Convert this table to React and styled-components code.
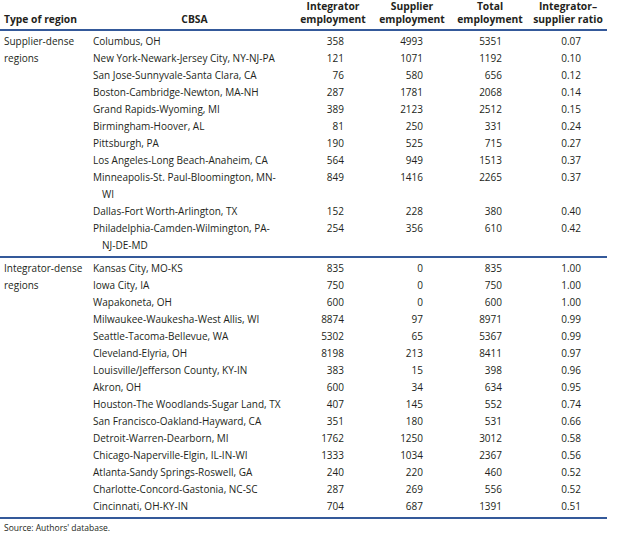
import React from 'react';
import styled, { createGlobalStyle } from 'styled-components';

const GlobalStyle = createGlobalStyle`
  html, body {
    margin: 0;
    padding: 0;
    background: #ffffff;
  }
  body {
    font-family: "Open Sans", "Noto Sans", "Liberation Sans", sans-serif;
    color: #231f20;
  }
`;

const RULE = '#34599a';

// column geometry: width, right padding for numbers, header shift
const COLS = [
  { w: 93 },
  { w: 203 },
  { w: 74, pr: 26 },
  { w: 84, pr: 31 },
  { w: 72, pr: 24 },
  { w: 81, pr: 26, hl: 3 },
];

const Wrapper = styled.div`
  width: 607px;
`;

const Table = styled.table`
  width: 607px;
  border-collapse: collapse;
  table-layout: fixed;
  font-size: 10px;
  border-bottom: 2px solid ${RULE};
`;

const HeadCell = styled.th`
  font-weight: 700;
  font-size: 10.3px;
  line-height: 13px;
  padding: 0 0 3px ${p => p.$pl || 0}px;
  text-align: ${p => p.$align || 'center'};
  vertical-align: bottom;
  white-space: nowrap;
  border-bottom: 2px solid ${RULE};
`;

const Row = styled.tr`
  border-top: ${p => (p.$rule ? `2px solid ${RULE}` : 'none')};
`;

const Cell = styled.td`
  line-height: 17px;
  vertical-align: top;
  padding: ${p => (p.$first ? 2 : 0)}px ${p => p.$pr || 0}px
    ${p => (p.$last ? 2 : 0)}px ${p => p.$pl || 0}px;
  text-align: ${p => (p.$num ? 'right' : 'left')};
  white-space: nowrap;
`;

const Cont = styled.span`
  display: block;
  padding-left: ${p => (p.$indent ? 9 : 0)}px;
`;

const Source = styled.div`
  font-size: 8.5px;
  line-height: 12px;
  padding: 3px 0 0 4px;
`;

const groups = [
  {
    label: ['Supplier-dense', 'regions'],
    rows: [
      [['Columbus, OH'], 358, 4993, 5351, '0.07'],
      [['New York-Newark-Jersey City, NY-NJ-PA'], 121, 1071, 1192, '0.10'],
      [['San Jose-Sunnyvale-Santa Clara, CA'], 76, 580, 656, '0.12'],
      [['Boston-Cambridge-Newton, MA-NH'], 287, 1781, 2068, '0.14'],
      [['Grand Rapids-Wyoming, MI'], 389, 2123, 2512, '0.15'],
      [['Birmingham-Hoover, AL'], 81, 250, 331, '0.24'],
      [['Pittsburgh, PA'], 190, 525, 715, '0.27'],
      [['Los Angeles-Long Beach-Anaheim, CA'], 564, 949, 1513, '0.37'],
      [['Minneapolis-St. Paul-Bloomington, MN-', 'WI'], 849, 1416, 2265, '0.37'],
      [['Dallas-Fort Worth-Arlington, TX'], 152, 228, 380, '0.40'],
      [['Philadelphia-Camden-Wilmington, PA-', 'NJ-DE-MD'], 254, 356, 610, '0.42'],
    ],
  },
  {
    label: ['Integrator-dense', 'regions'],
    rows: [
      [['Kansas City, MO-KS'], 835, 0, 835, '1.00'],
      [['Iowa City, IA'], 750, 0, 750, '1.00'],
      [['Wapakoneta, OH'], 600, 0, 600, '1.00'],
      [['Milwaukee-Waukesha-West Allis, WI'], 8874, 97, 8971, '0.99'],
      [['Seattle-Tacoma-Bellevue, WA'], 5302, 65, 5367, '0.99'],
      [['Cleveland-Elyria, OH'], 8198, 213, 8411, '0.97'],
      [['Louisville/Jefferson County, KY-IN'], 383, 15, 398, '0.96'],
      [['Akron, OH'], 600, 34, 634, '0.95'],
      [['Houston-The Woodlands-Sugar Land, TX'], 407, 145, 552, '0.74'],
      [['San Francisco-Oakland-Hayward, CA'], 351, 180, 531, '0.66'],
      [['Detroit-Warren-Dearborn, MI'], 1762, 1250, 3012, '0.58'],
      [['Chicago-Naperville-Elgin, IL-IN-WI'], 1333, 1034, 2367, '0.56'],
      [['Atlanta-Sandy Springs-Roswell, GA'], 240, 220, 460, '0.52'],
      [['Charlotte-Concord-Gastonia, NC-SC'], 287, 269, 556, '0.52'],
      [['Cincinnati, OH-KY-IN'], 704, 687, 1391, '0.51'],
    ],
  },
];

function App() {
  return (
    <Wrapper>
      <GlobalStyle />
      <Table>
        <colgroup>
          {COLS.map((c, i) => (
            <col key={i} style={{ width: c.w }} />
          ))}
        </colgroup>
        <thead>
          <tr>
            <HeadCell $align="left" $pl={4}>Type of region</HeadCell>
            <HeadCell>CBSA</HeadCell>
            <HeadCell>Integrator<br />employment</HeadCell>
            <HeadCell>Supplier<br />employment</HeadCell>
            <HeadCell>Total<br />employment</HeadCell>
            <HeadCell $pl={COLS[5].hl}>Integrator–<br />supplier ratio</HeadCell>
          </tr>
        </thead>
        {groups.map((g, gi) => (
          <tbody key={gi}>
            {g.rows.map((r, ri) => {
              const first = ri === 0;
              const last = ri === g.rows.length - 1;
              return (
                <Row key={ri} $rule={first && gi > 0}>
                  {first && (
                    <Cell rowSpan={g.rows.length} $first $last $pl={4}>
                      {g.label.map((l, li) => (
                        <Cont key={li}>{l}</Cont>
                      ))}
                    </Cell>
                  )}
                  <Cell $first={first} $last={last}>
                    {r[0].map((l, li) => (
                      <Cont key={li} $indent={li > 0}>{l}</Cont>
                    ))}
                  </Cell>
                  {r.slice(1).map((v, vi) => (
                    <Cell key={vi} $num $first={first} $last={last} $pr={COLS[vi + 2].pr}>
                      {v}
                    </Cell>
                  ))}
                </Row>
              );
            })}
          </tbody>
        ))}
      </Table>
      <Source>Source: Authors' database.</Source>
    </Wrapper>
  );
}

export default App;
